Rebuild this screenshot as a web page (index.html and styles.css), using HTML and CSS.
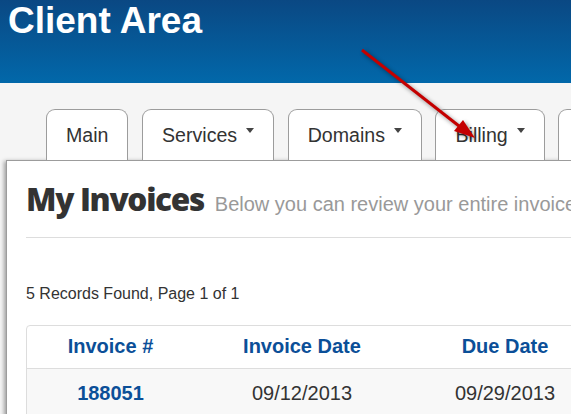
FILE: index.html
```html
<!DOCTYPE html>
<html lang="en">

<head>
    <meta charset="UTF-8">
    <meta name="viewport" content="width=device-width, initial-scale=1.0">
    <title>Client Area - My Invoices</title>
    <link rel="stylesheet" href="styles.css">
</head>

<body>
    <!-- 頁首 -->
    <header class="site-header">
        <h1>Client Area</h1>
    </header>

    <div class="main">
        <!-- 分頁選單 -->
        <nav class="tabs">
            <a class="tab" href="#">Main</a>
            <a class="tab" href="#">Services <span class="caret"></span></a>
            <a class="tab" href="#">Domains <span class="caret"></span></a>
            <a class="tab" href="#">Billing <span class="caret"></span></a>
            <a class="tab" href="#">Support <span class="caret"></span></a>
        </nav>

        <!-- 內容區 -->
        <div class="panel">
            <div class="page-header">
                <h2>My Invoices <small>Below you can review your entire invoice history with us</small></h2>
            </div>

            <p class="records">5 Records Found, Page 1 of 1</p>

            <table class="invoices">
                <thead>
                    <tr>
                        <th class="col-num">Invoice #</th>
                        <th class="col-date">Invoice Date</th>
                        <th class="col-due">Due Date</th>
                        <th>Total</th>
                        <th>Status</th>
                    </tr>
                </thead>
                <tbody>
                    <tr>
                        <td><a href="#">188051</a></td>
                        <td>09/12/2013</td>
                        <td>09/29/2013</td>
                        <td>$10.00 USD</td>
                        <td>Unpaid</td>
                    </tr>
                </tbody>
            </table>
        </div>
    </div>

    <!-- 紅色箭頭標註 -->
    <svg class="arrow" width="571" height="414" viewBox="0 0 571 414">
        <line x1="362" y1="50" x2="459" y2="126" stroke="#c40000" stroke-width="3" />
        <polygon points="475,138 454,131 463,120" fill="#c40000" />
    </svg>
</body>

</html>
```

FILE: styles.css
```css
/* 基本設定 */
body {
    margin: 0;
    background-color: #f5f5f5;
    font-family: "Liberation Sans", Arial, sans-serif;
    color: #333;
    overflow: hidden;
}

/* 頁首 */
.site-header {
    height: 83px;
    background: linear-gradient(#0a4883, #0268aa);
}

.site-header h1 {
    margin: 0;
    padding: 2px 0 0 8px;
    font-size: 37px;
    line-height: 37px;
    font-weight: bold;
    color: #fff;
}

/* 分頁選單 */
.tabs {
    display: flex;
    gap: 13.5px;
    padding: 26px 0 0 46px;
    white-space: nowrap;
}

.tab {
    display: flex;
    align-items: center;
    height: 50px;
    padding: 0 19px;
    background-color: #fff;
    border: 1px solid #9c9c9c;
    border-bottom: none;
    border-radius: 9px 9px 0 0;
    font-size: 19.6px;
    color: #333;
    text-decoration: none;
}

.caret {
    align-self: flex-start;
    margin: 18px 0 0 9px;
    border-top: 5px solid #444;
    border-left: 4px solid transparent;
    border-right: 4px solid transparent;
}

/* 內容區 */
.panel {
    width: 900px;
    height: 260px;
    margin-left: 6px;
    padding: 0 19px;
    background-color: #fff;
    border: 1px solid #9c9c9c;
    box-shadow: -2px 1px 4px rgba(0, 0, 0, 0.35);
}

.page-header {
    margin-top: 21px;
    padding-bottom: 20px;
    border-bottom: 1px solid #ddd;
}

.page-header h2 {
    margin: 0;
    font-family: "Open Sans", sans-serif;
    font-size: 31.5px;
    font-weight: 800;
    line-height: 1.1;
    letter-spacing: -1.3px;
    color: #333;
    white-space: nowrap;
}

.page-header small {
    margin-left: 4px;
    font-family: "Liberation Sans", Arial, sans-serif;
    font-size: 20px;
    font-weight: normal;
    line-height: 1;
    letter-spacing: 0;
    color: #999;
}

.records {
    margin: 46px 0 21px;
    font-size: 16px;
    line-height: 20px;
}

/* 發票表格 */
.invoices {
    border-collapse: separate;
    border-spacing: 0;
    border: 1px solid #ddd;
    border-radius: 4px;
    table-layout: fixed;
    font-size: 20px;
}

.invoices th,
.invoices td {
    text-align: center;
    padding: 0;
}

.invoices th {
    height: 42px;
    color: #0b4f98;
    font-weight: bold;
    border-bottom: 1px solid #ddd;
}

.invoices td {
    height: 50px;
    background-color: #f8f8f8;
}

.invoices td a {
    color: #0b4f98;
    font-weight: bold;
    text-decoration: none;
}

.col-num {
    width: 167px;
}

.col-date {
    width: 216px;
}

.col-due {
    width: 190px;
}

/* 紅色箭頭 */
.arrow {
    position: absolute;
    top: 0;
    left: 0;
    filter: drop-shadow(2px 2px 2px rgba(0, 0, 0, 0.45));
    pointer-events: none;
}
```
